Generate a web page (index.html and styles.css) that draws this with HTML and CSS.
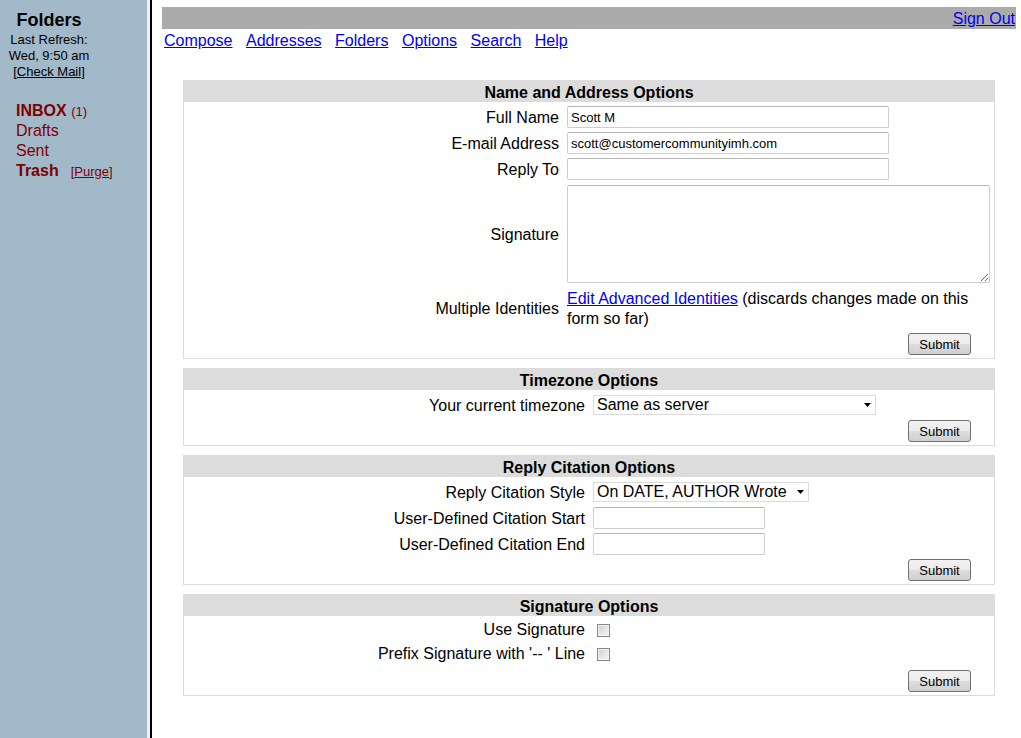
FILE: index.html
```html
<!DOCTYPE html>
<html lang="en">
<head>
<meta charset="utf-8">
<title>Options</title>
<link rel="stylesheet" href="styles.css">
</head>
<body>
<div class="page">
  <aside class="sidebar">
    <div class="sb-head">
      <div class="sb-title">Folders</div>
      <div class="sb-refresh">Last Refresh:<br>Wed, 9:50 am<br>[<a href="#" class="check">Check Mail</a>]</div>
    </div>
    <ul class="folders">
      <li><a href="#" class="folder folder--bold">INBOX</a> <span class="count">(1)</span></li>
      <li><a href="#" class="folder">Drafts</a></li>
      <li><a href="#" class="folder">Sent</a></li>
      <li><a href="#" class="folder folder--bold">Trash</a><span class="purge">[<a href="#">Purge</a>]</span></li>
    </ul>
  </aside>
  <div class="divider"></div>
  <main class="main">
    <div class="topbar"><a href="#">Sign Out</a></div>
    <nav class="menu">
      <a href="#">Compose</a>
      <a href="#">Addresses</a>
      <a href="#">Folders</a>
      <a href="#">Options</a>
      <a href="#">Search</a>
      <a href="#">Help</a>
    </nav>

    <div class="sections">
      <form class="opt">
        <h2 class="opt-title">Name and Address Options</h2>
        <div class="opt-body opt-body--name">
          <label class="lbl" for="fullname">Full Name</label>
          <div class="fld"><input id="fullname" class="txt txt--long" type="text" value="Scott M"></div>
          <label class="lbl" for="email">E-mail Address</label>
          <div class="fld"><input id="email" class="txt txt--long" type="text" value="scott@customercommunityimh.com"></div>
          <label class="lbl" for="replyto">Reply To</label>
          <div class="fld"><input id="replyto" class="txt txt--long" type="text" value=""></div>
          <label class="lbl" for="sig">Signature</label>
          <div class="fld"><textarea id="sig" class="sig"></textarea></div>
          <div class="lbl">Multiple Identities</div>
          <p class="fld fld--text"><a href="#">Edit Advanced Identities</a>&nbsp;(discards changes made on this form so far)</p>
          <div class="actions actions--name"><button type="button" class="btn">Submit</button></div>
        </div>
      </form>

      <form class="opt">
        <h2 class="opt-title">Timezone Options</h2>
        <div class="opt-body">
          <label class="lbl" for="tz">Your current timezone</label>
          <div class="fld">
            <span class="sel">
              <select id="tz" class="select select--tz"><option>Same as server</option></select>
              <svg class="sel-arrow" width="7" height="4" viewBox="0 0 7 4"><path d="M0 0h7L3.5 4z" fill="#000"/></svg>
            </span>
          </div>
          <div class="actions"><button type="button" class="btn">Submit</button></div>
        </div>
      </form>

      <form class="opt">
        <h2 class="opt-title">Reply Citation Options</h2>
        <div class="opt-body">
          <label class="lbl" for="cite">Reply Citation Style</label>
          <div class="fld">
            <span class="sel">
              <select id="cite" class="select select--cite"><option>On DATE, AUTHOR Wrote</option></select>
              <svg class="sel-arrow" width="7" height="4" viewBox="0 0 7 4"><path d="M0 0h7L3.5 4z" fill="#000"/></svg>
            </span>
          </div>
          <label class="lbl" for="cstart">User-Defined Citation Start</label>
          <div class="fld"><input id="cstart" class="txt txt--short" type="text" value=""></div>
          <label class="lbl" for="cend">User-Defined Citation End</label>
          <div class="fld"><input id="cend" class="txt txt--short" type="text" value=""></div>
          <div class="actions"><button type="button" class="btn">Submit</button></div>
        </div>
      </form>

      <form class="opt">
        <h2 class="opt-title">Signature Options</h2>
        <div class="opt-body">
          <label class="lbl lbl--check" for="usesig">Use Signature</label>
          <div class="fld fld--check"><input id="usesig" class="chk" type="checkbox"></div>
          <label class="lbl lbl--check" for="prefix">Prefix Signature with '-- ' Line</label>
          <div class="fld fld--check"><input id="prefix" class="chk" type="checkbox"></div>
          <div class="actions actions--sig"><button type="button" class="btn">Submit</button></div>
        </div>
      </form>
    </div>
  </main>
</div>
</body>
</html>
```

FILE: styles.css
```css
* { box-sizing: border-box; }

html, body {
  margin: 0;
  padding: 0;
  height: 100%;
}

body {
  font-family: "Liberation Sans", Arial, sans-serif;
  font-size: 16px;
  color: #000;
  background: #fff;
  overflow: hidden;
}

a { color: #0000ee; }

.page {
  display: flex;
  height: 738px;
}

/* ---------- sidebar ---------- */
.sidebar {
  width: 147px;
  flex: none;
  background: #a2b9ca;
}

.sb-head {
  width: 82px;
  margin-left: 8px;
  padding-top: 10px;
  text-align: center;
}

.sb-title {
  font-size: 18px;
  font-weight: bold;
  line-height: 21px;
}

.sb-refresh {
  font-size: 13px;
  line-height: 16px;
  margin-top: 1px;
}

.sb-refresh .check { color: #000; }

.folders {
  list-style: none;
  margin: 21px 0 0;
  padding: 0 0 0 16px;
  line-height: 20px;
  color: #800000;
}

.folders li {
  height: 20px;
}

.folder {
  color: #800000;
  text-decoration: none;
}

.folder--bold { font-weight: bold; }

.count,
.purge {
  font-size: 13px;
  line-height: 1;
}

.purge { margin-left: 12px; }

.purge a { color: #800000; }

.divider {
  width: 5px;
  flex: none;
  border-left: 3px solid #eef1f3;
  background: #000;
}

/* ---------- main ---------- */
.main {
  flex: 1;
  padding: 7px 5px 0 10px;
}

.topbar {
  height: 22px;
  padding: 1px 1px 0 0;
  line-height: 21px;
  background: #ababab;
  text-align: right;
}

.menu {
  display: flex;
  gap: 13.5px;
  padding: 2px 0 0 2px;
  line-height: 20px;
}

.sections {
  margin-top: 29px;
}

.opt {
  width: 812px;
  margin: 0 auto 9px;
  border: 1px solid #dcdcdc;
  border-top: none;
}

.opt-title {
  margin: 0;
  height: 22px;
  padding-top: 3px;
  line-height: 19px;
  background: #dcdcdc;
  font-size: 16px;
  font-weight: bold;
  text-align: center;
}

.opt-body {
  display: grid;
  grid-template-columns: 401px 1fr;
  column-gap: 8px;
  row-gap: 4px;
  padding: 4px 0 3px;
}

.opt-body--name {
  grid-template-columns: 375px 1fr;
}

.lbl {
  text-align: right;
  align-self: center;
  line-height: 20px;
  padding-top: 1px;
}

.lbl--check { padding-top: 0; }

.fld {
  min-height: 22px;
  display: flex;
  align-items: center;
}

.fld--check { min-height: 20px; }

.fld--text {
  display: block;
  margin: 0;
  padding-top: 1px;
  line-height: 20px;
}

.actions {
  grid-column: 1 / -1;
  display: flex;
  justify-content: flex-end;
  padding-right: 23px;
}

.actions--name { margin-top: 0; }
.actions--sig { margin-top: 2px; }

.txt {
  height: 22px;
  border: 1px solid #cdcdcd;
  border-top-color: #b5b5b5;
  border-radius: 2px;
  font-family: "Liberation Sans", Arial, sans-serif;
  font-size: 13px;
  padding: 0 3px;
  color: #000;
  background: #fff;
}

.txt--long { width: 322px; }
.txt--short { width: 172px; }

.sig {
  width: 423px;
  height: 98px;
  margin: 1px 0;
  border: 1px solid #cdcdcd;
  border-top-color: #b5b5b5;
  border-radius: 2px;
  font-family: "Liberation Sans", Arial, sans-serif;
  font-size: 13px;
  resize: both;
}

.sel {
  position: relative;
  display: inline-flex;
}

.select {
  -webkit-appearance: none;
  appearance: none;
  height: 20px;
  border: 1px solid #dcdcdc;
  border-radius: 0;
  background: #fff;
  font-family: "Liberation Sans", Arial, sans-serif;
  font-size: 16px;
  line-height: 18px;
  padding: 0 0 0 3px;
  color: #000;
}

.select--tz { width: 283px; }
.select--cite { width: 216px; }

.sel-arrow {
  position: absolute;
  right: 5px;
  top: 8px;
  pointer-events: none;
}

.chk {
  -webkit-appearance: none;
  appearance: none;
  width: 13px;
  height: 13px;
  margin: 3px 3px 3px 4px;
  border: 1px solid #888;
  border-radius: 0;
  background: linear-gradient(135deg, #d0d0d0, #f6f6f6);
  box-shadow: inset 0 0 0 1px #f2f2f2;
}

.btn {
  width: 63px;
  height: 22px;
  padding: 0;
  font-family: "Liberation Sans", Arial, sans-serif;
  font-size: 13px;
  color: #000;
  border: 1px solid #707070;
  border-radius: 3px;
  background: linear-gradient(#f2f2f2 0%, #ebebeb 50%, #dddddd 51%, #cfcfcf 100%);
}
```
